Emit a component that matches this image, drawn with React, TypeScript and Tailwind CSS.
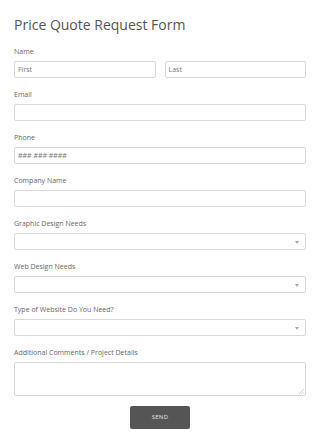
import { ReactNode } from "react";

const font = { fontFamily: '"Open Sans", "Liberation Sans", sans-serif' };

function Label({ children }: { children: ReactNode }) {
  return <div className="h-[10px] text-[7px] leading-[10px] text-[#666] mb-[4px]">{children}</div>;
}

function Input({ placeholder }: { placeholder?: string }) {
  return (
    <div className="h-[17px] w-full rounded-[2px] border border-[#d9d9d9] bg-white px-[3px] text-[7px] leading-[15px] text-[#777]">
      {placeholder}
    </div>
  );
}

function Select() {
  return (
    <div className="relative h-[17px] w-full rounded-[2px] border border-[#d9d9d9] bg-white">
      <span className="absolute right-[6px] top-[7px] h-0 w-0 border-x-[2.5px] border-t-[3px] border-x-transparent border-t-[#aaa]" />
    </div>
  );
}

function Field({ label, children }: { label: string; children: ReactNode }) {
  return (
    <div className="mb-[12px]">
      <Label>{label}</Label>
      {children}
    </div>
  );
}

export default function App() {
  return (
    <div className="min-h-[441px] w-[320px] bg-white px-[14px] pt-[14px]" style={font}>
      <h1 className="mb-[11px] text-[14px] leading-[22px] text-[#555]">Price Quote Request Form</h1>

      <Field label="Name">
        <div className="flex gap-[9px]">
          <Input placeholder="First" />
          <Input placeholder="Last" />
        </div>
      </Field>
      <Field label="Email">
        <Input />
      </Field>
      <Field label="Phone">
        <Input placeholder="### ### ####" />
      </Field>
      <Field label="Company Name">
        <Input />
      </Field>
      <Field label="Graphic Design Needs">
        <Select />
      </Field>
      <Field label="Web Design Needs">
        <Select />
      </Field>
      <Field label="Type of Website Do You Need?">
        <Select />
      </Field>
      <div>
        <Label>Additional Comments / Project Details</Label>
        <div className="relative">
          <textarea className="block h-[34px] w-full resize-none rounded-[2px] border border-[#d9d9d9] bg-white" />
          {/* resize grip */}
          <svg className="absolute bottom-[2px] right-[2px]" width="5" height="5" viewBox="0 0 5 5">
            <path d="M5 0 L0 5 M5 2.5 L2.5 5" stroke="#bbb" strokeWidth="0.7" />
          </svg>
        </div>
      </div>

      <div className="flex justify-center pt-[10px]">
        <button className="h-[23px] w-[60px] rounded-[2px] bg-[#555] text-[6px] tracking-[0.3px] text-[#e5e5e5]">
          SEND
        </button>
      </div>
    </div>
  );
}
